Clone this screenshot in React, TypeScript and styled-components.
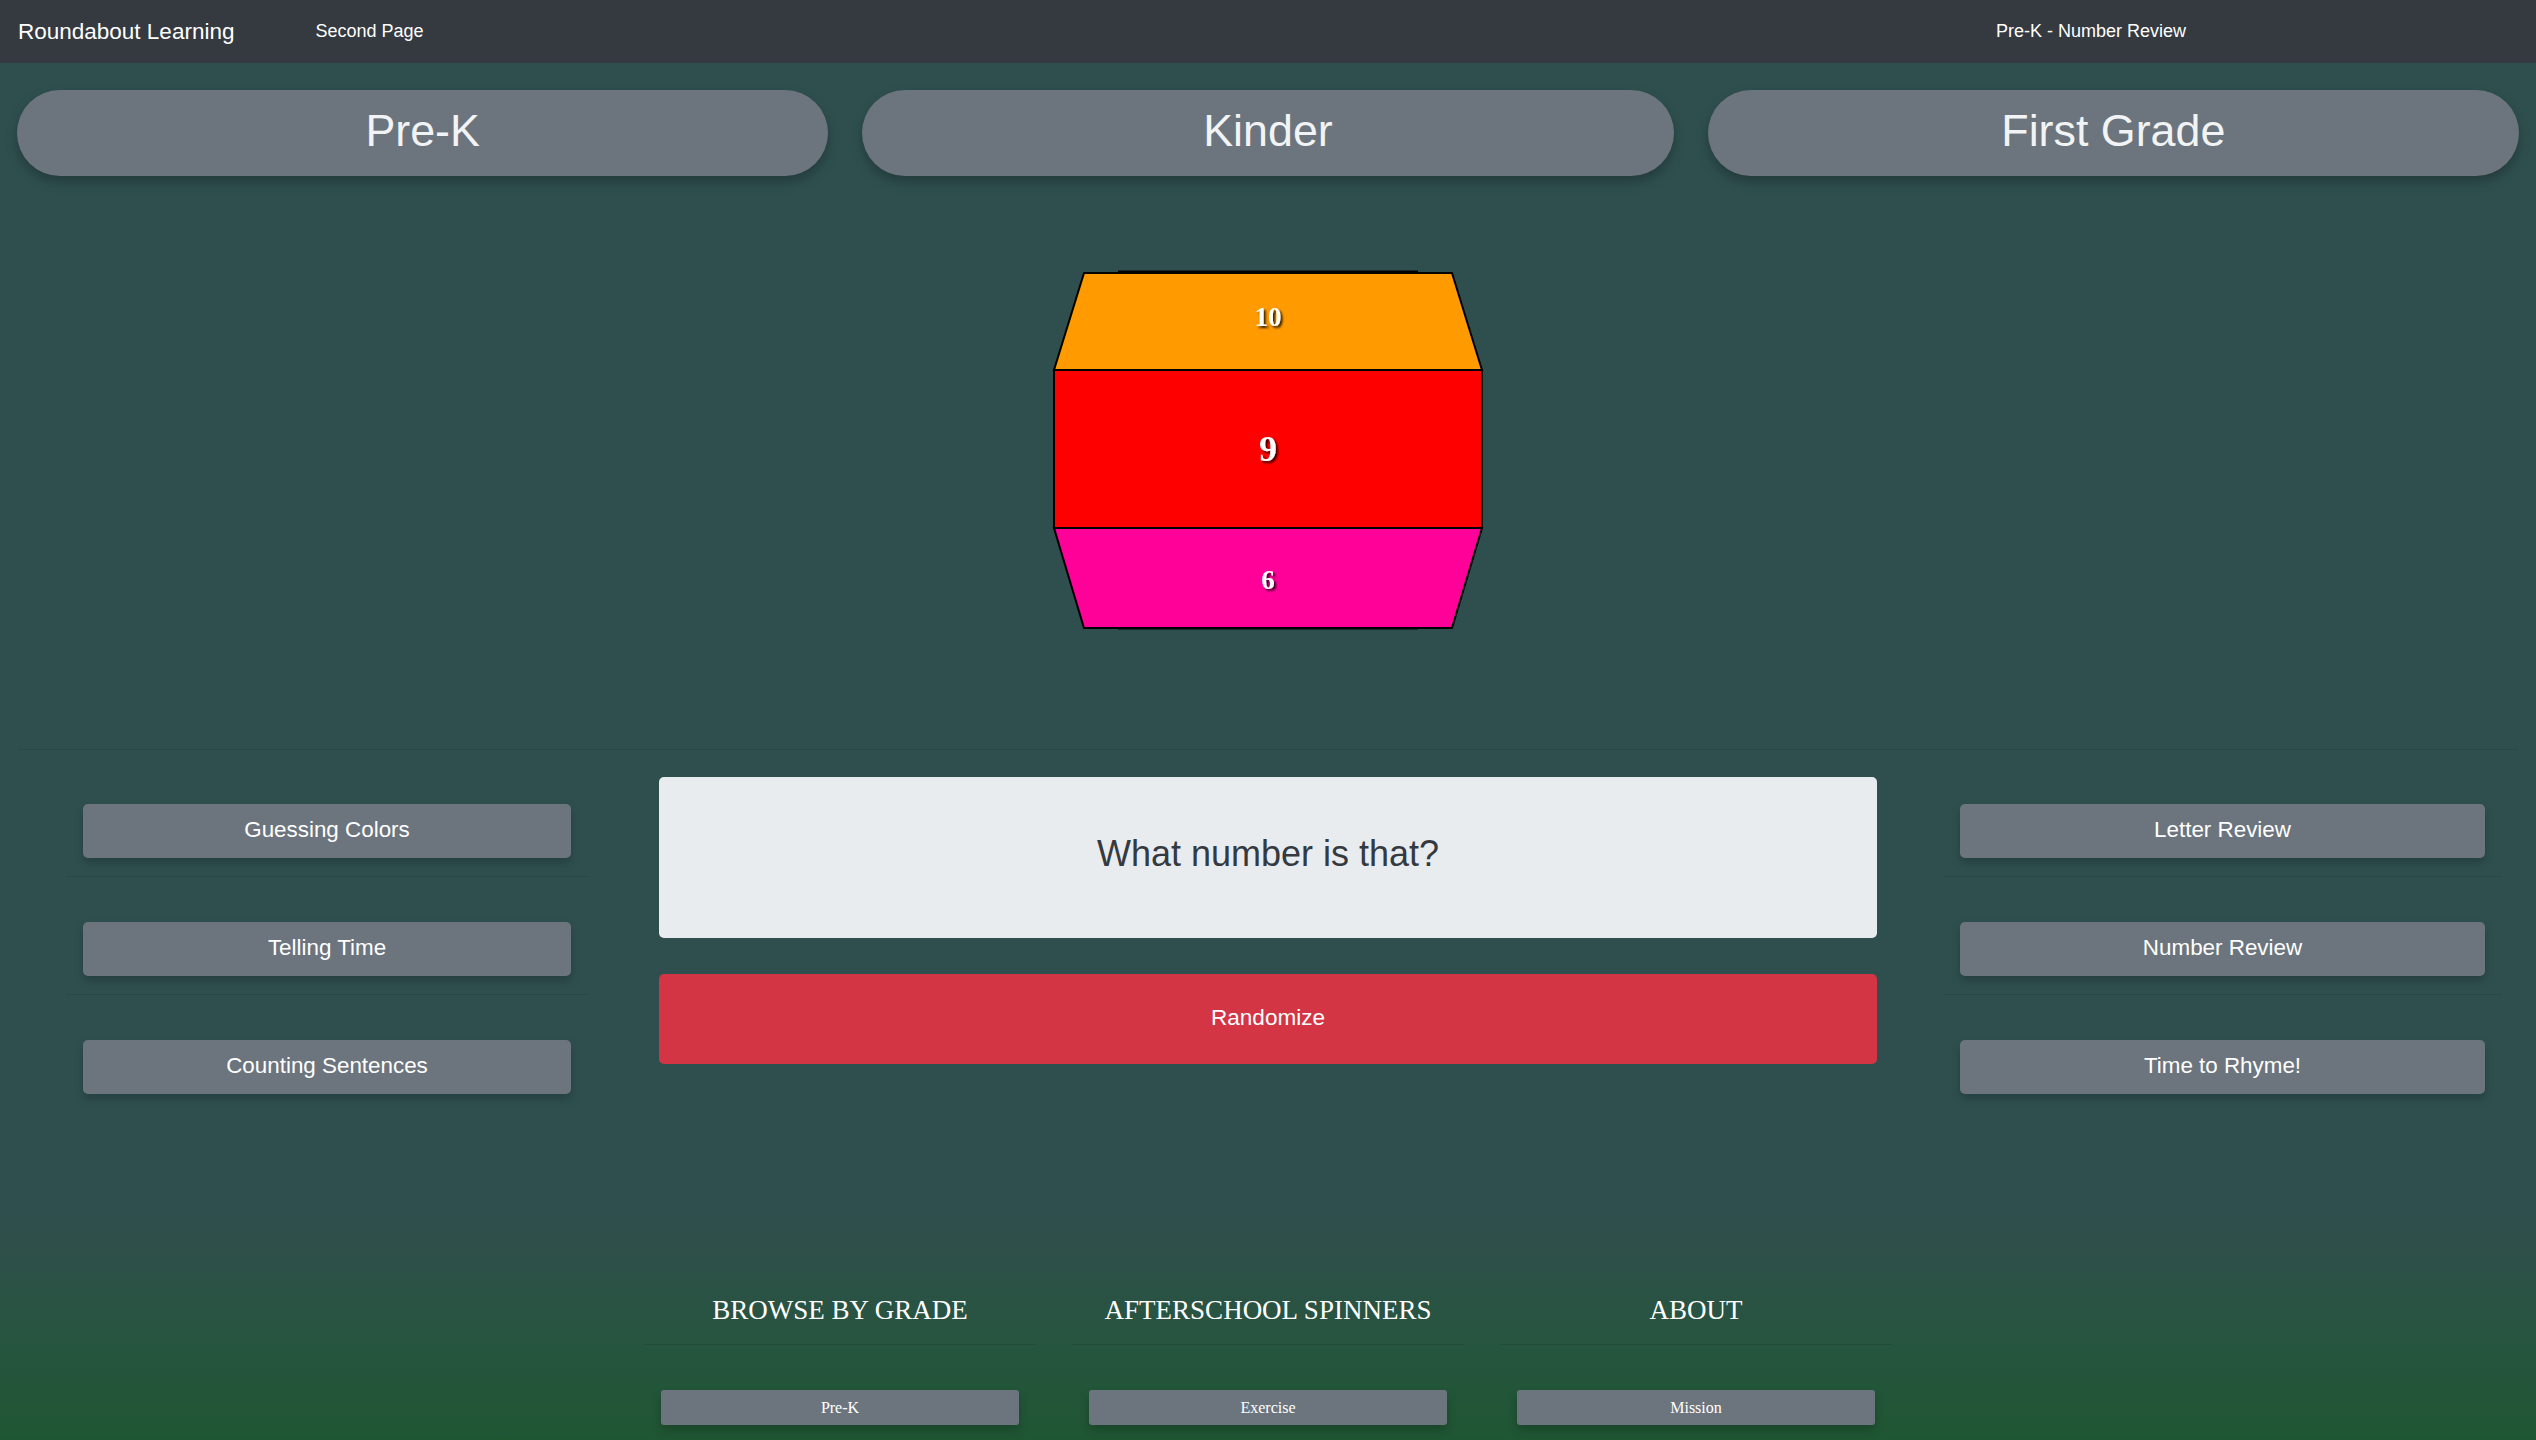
import React from "react";
import styled, { createGlobalStyle } from "styled-components";

const GlobalStyle = createGlobalStyle`
  html,
  body {
    margin: 0;
    padding: 0;
    background-color: #2f4f4f;
  }
  body {
    font-family: "Liberation Sans", Arial, sans-serif;
  }
  * {
    box-sizing: border-box;
  }
`;

const Page = styled.div`
  min-height: 1440px;
  display: flex;
  flex-direction: column;
  background-color: #2f4f4f;
`;

const NavBar = styled.nav`
  display: flex;
  align-items: center;
  height: 63px;
  padding: 0 18px;
  background-color: #343a40;
  color: #fff;
`;

const Brand = styled.a`
  font-size: 22.5px;
  color: #fff;
  text-decoration: none;
`;

const NavLink = styled.a`
  margin-left: 81px;
  font-size: 18px;
  color: #fff;
  text-decoration: none;
`;

const NavTitle = styled.span`
  margin-left: auto;
  margin-right: 332px;
  font-size: 18px;
  color: #fff;
`;

const GradeRow = styled.div`
  display: grid;
  grid-template-columns: repeat(3, 1fr);
  padding-top: 27px;
`;

const GradeCell = styled.div`
  padding: 0 17px;
`;

const GradePill = styled.button`
  display: flex;
  align-items: center;
  justify-content: center;
  width: 100%;
  height: 86px;
  padding: 0 0 6px;
  border: none;
  border-radius: 43px;
  background-color: #6c757d;
  color: #f1f3f5;
  font-family: "Liberation Sans", Arial, sans-serif;
  font-size: 44.8px;
  box-shadow: 0 6px 12px rgba(0, 0, 0, 0.25);
  cursor: pointer;
`;

const WheelStage = styled.div`
  display: flex;
  justify-content: center;
  padding: 94px 0 119px;
`;

const Divider = styled.hr`
  margin: 0 18px;
  border: none;
  border-top: 1px solid rgba(0, 0, 0, 0.1);
`;

const MainRow = styled.div`
  display: grid;
  grid-template-columns: 25% 50% 25%;
`;

const SidePanel = styled.div<{ $left: number; $right: number }>`
  display: flex;
  flex-direction: column;
  padding: 54px ${(p) => p.$right}px 0 ${(p) => p.$left}px;
`;

const SideRule = styled.hr`
  margin: 18px 0 45px;
  border: none;
  border-top: 1px solid rgba(0, 0, 0, 0.1);
`;

const SideButton = styled.button`
  margin: 0 17px;
  height: 54px;
  padding: 0 0 2px;
  border: none;
  border-radius: 5px;
  background-color: #6c757d;
  color: #fff;
  font-family: "Liberation Sans", Arial, sans-serif;
  font-size: 22.4px;
  box-shadow: 0 5px 10px rgba(0, 0, 0, 0.2);
  cursor: pointer;
`;

const Center = styled.div`
  display: flex;
  flex-direction: column;
  gap: 36px;
  padding: 27px 25px 0;
`;

const QuestionBox = styled.div`
  display: flex;
  align-items: center;
  justify-content: center;
  height: 161px;
  padding-bottom: 8px;
  border-radius: 5px;
  background-color: #e9ecef;
  color: #343a40;
  font-size: 36px;
`;

const RandomButton = styled.button`
  height: 90px;
  padding: 0 0 2px;
  border: none;
  border-radius: 5px;
  background-color: #d33545;
  color: #fff;
  font-family: "Liberation Sans", Arial, sans-serif;
  font-size: 22.5px;
  cursor: pointer;
`;

const Footer = styled.footer`
  flex: 1;
  margin-top: 104px;
  padding: 97px 0 10px;
  background: linear-gradient(
    to bottom,
    #2f4f4f 0%,
    #2e5049 22%,
    #26553f 62%,
    #1f5632 100%
  );
`;

const FooterGrid = styled.div`
  display: grid;
  grid-template-columns: repeat(3, 1fr);
  column-gap: 36px;
  width: 1248px;
  margin: 0 auto;
`;

const FooterCol = styled.div`
  display: flex;
  flex-direction: column;
`;

const FooterHeading = styled.h5`
  margin: 0;
  text-align: center;
  font-family: "Liberation Serif", "Times New Roman", serif;
  font-size: 27px;
  font-weight: normal;
  color: #fff;
`;

const FooterRule = styled.hr`
  margin: 18px 0 45px;
  border: none;
  border-top: 1px solid rgba(0, 0, 0, 0.1);
`;

const FooterButton = styled.button`
  margin: 0 17px;
  height: 35px;
  border: none;
  border-radius: 3px;
  background-color: #6c757d;
  color: #fff;
  font-family: "Liberation Serif", "Times New Roman", serif;
  font-size: 16px;
  box-shadow: 0 5px 10px rgba(0, 0, 0, 0.2);
  cursor: pointer;
`;

const WheelSvg = styled.svg`
  display: block;
  overflow: visible;
`;

const WheelNumber = styled.text<{ $size: number }>`
  font-family: "Liberation Serif", "Times New Roman", serif;
  font-size: ${(p) => p.$size}px;
  font-weight: bold;
  fill: #fff;
`;

type Face = {
  label: string;
  fill: string;
  points: string;
  textY: number;
  size: number;
};

const faces: Face[] = [
  { label: "10", fill: "#ff9a00", points: "32,3 400,3 430,100 2,100", textY: 56, size: 27 },
  { label: "9", fill: "#ff0000", points: "2,100 430,100 430,258 2,258", textY: 191, size: 36 },
  { label: "6", fill: "#ff0099", points: "2,258 430,258 400,358 32,358", textY: 319, size: 27 },
];

const Wheel = () => (
  <WheelSvg width={432} height={360} viewBox="0 0 432 360">
    <defs>
      <filter id="numShadow" x="-50%" y="-50%" width="200%" height="200%">
        <feDropShadow dx="2" dy="2" stdDeviation="1.2" floodColor="#000" floodOpacity="0.8" />
      </filter>
    </defs>
    <line x1="66" y1="1.5" x2="366" y2="1.5" stroke="#000" strokeWidth="2" />
    <line x1="66" y1="358.5" x2="366" y2="358.5" stroke="#000" strokeWidth="2" />
    {faces.map((f) => (
      <polygon key={f.label} points={f.points} fill={f.fill} stroke="#000" strokeWidth="2" />
    ))}
    {faces.map((f) => (
      <WheelNumber
        key={`t${f.label}`}
        $size={f.size}
        x={216}
        y={f.textY}
        textAnchor="middle"
        filter="url(#numShadow)"
      >
        {f.label}
      </WheelNumber>
    ))}
  </WheelSvg>
);

const grades = ["Pre-K", "Kinder", "First Grade"];
const leftGames = ["Guessing Colors", "Telling Time", "Counting Sentences"];
const rightGames = ["Letter Review", "Number Review", "Time to Rhyme!"];
const footerCols = [
  { title: "BROWSE BY GRADE", link: "Pre-K" },
  { title: "AFTERSCHOOL SPINNERS", link: "Exercise" },
  { title: "ABOUT", link: "Mission" },
];

const GameList = ({ items, left, right }: { items: string[]; left: number; right: number }) => (
  <SidePanel $left={left} $right={right}>
    {items.map((name, i) => (
      <React.Fragment key={name}>
        <SideButton>{name}</SideButton>
        {i < items.length - 1 && <SideRule />}
      </React.Fragment>
    ))}
  </SidePanel>
);

export default function App() {
  return (
    <Page>
      <GlobalStyle />
      <NavBar>
        <Brand href="#">Roundabout Learning</Brand>
        <NavLink href="#">Second Page</NavLink>
        <NavTitle>Pre-K - Number Review</NavTitle>
      </NavBar>

      <GradeRow>
        {grades.map((g) => (
          <GradeCell key={g}>
            <GradePill>{g}</GradePill>
          </GradeCell>
        ))}
      </GradeRow>

      <WheelStage>
        <Wheel />
      </WheelStage>

      <Divider />

      <MainRow>
        <GameList items={leftGames} left={66} right={46} />
        <Center>
          <QuestionBox>What number is that?</QuestionBox>
          <RandomButton>Randomize</RandomButton>
        </Center>
        <GameList items={rightGames} left={41} right={34} />
      </MainRow>

      <Footer>
        <FooterGrid>
          {footerCols.map((c) => (
            <FooterCol key={c.title}>
              <FooterHeading>{c.title}</FooterHeading>
              <FooterRule />
              <FooterButton>{c.link}</FooterButton>
            </FooterCol>
          ))}
        </FooterGrid>
      </Footer>
    </Page>
  );
}
